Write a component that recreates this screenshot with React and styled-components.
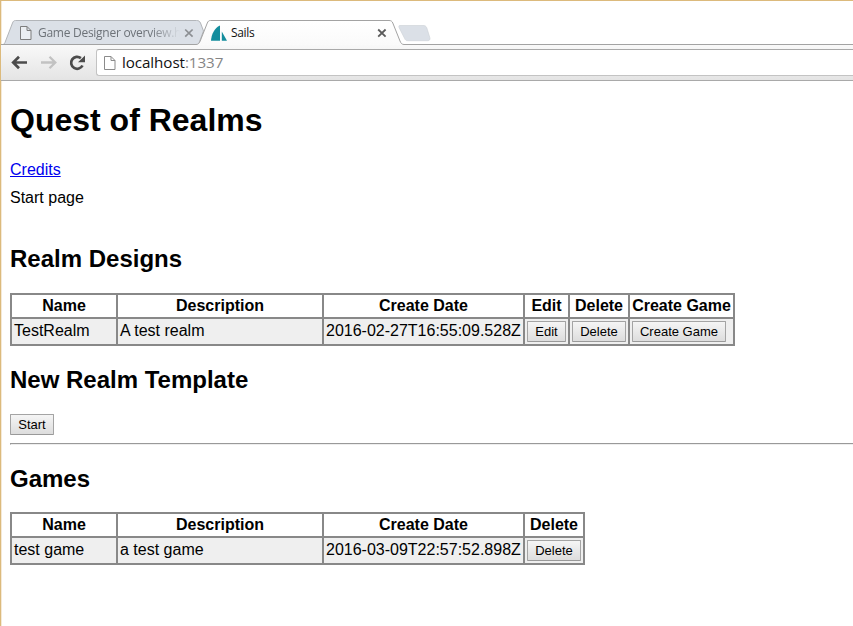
import React from 'react';
import styled, { createGlobalStyle } from 'styled-components';

const GlobalStyle = createGlobalStyle`
  * { box-sizing: border-box; }
  html, body { margin: 0; padding: 0; background: #fff; }
  body { width: 853px; height: 626px; overflow: hidden; }
`;

const Window = styled.div`
  display: flex;
  flex-direction: column;
  width: 853px;
  height: 626px;
  overflow: hidden;
  background: #fff;
  border-top: 1px solid #dcba7c;
  border-left: 1px solid #dcba7c;
  box-shadow: inset 1px 0 #f5ead8;
  color: #000;
  font-family: 'Liberation Sans', Arial, sans-serif;
  font-size: 16px;
`;

const TabStrip = styled.header`
  position: relative;
  height: 44px;
  flex: none;
  padding-top: 19px;
  display: flex;
`;

const StripArt = styled.svg`
  position: absolute;
  left: -1px;
  top: -1px;
  display: block;
`;

const Tab = styled.div`
  position: relative;
  display: flex;
  align-items: center;
  width: ${(p) => p.$width}px;
  height: 25px;
  padding-left: ${(p) => p.$inset}px;
`;

const TabTitle = styled.span`
  margin-left: ${(p) => (p.$active ? 0 : 6)}px;
  white-space: nowrap;
  font: 12px/18px 'Open Sans', sans-serif;
  letter-spacing: ${(p) => p.$tracking}px;
  color: ${(p) => (p.$active ? '#111' : '#6d7278')};
  ${(p) => !p.$active && 'mask-image: linear-gradient(90deg, #000 112px, transparent 142px);'}
`;

const Toolbar = styled.nav`
  position: relative;
  display: flex;
  align-items: center;
  height: 36px;
  flex: none;
  background: linear-gradient(#f9f9f9, #e4e4e4);
  border-bottom: 1px solid #a9a9a9;
`;

const NavIcons = styled.svg`
  display: block;
  width: 95px;
  height: 35px;
  flex: none;
`;

const AddressBar = styled.div`
  display: flex;
  align-items: center;
  flex: 1;
  height: 27px;
  padding-left: 7px;
  background: #fff;
  border: 1px solid #c3c3c3;
  border-top-color: #a9a9a9;
  border-right: 0;
  border-radius: 3px 0 0 3px;
`;

const Url = styled.span`
  margin-left: 6px;
  padding-bottom: 2px;
  font: 15.2px/22px 'Open Sans', sans-serif;
  letter-spacing: -0.08px;
  color: #111;
`;

const Port = styled.span`
  color: #858585;
`;

const Page = styled.main`
  display: flex;
  flex-direction: column;
  align-items: flex-start;
  padding-left: 9px;
`;

const Title = styled.h1`
  margin: 20px 0 0;
  font-size: 32px;
  line-height: 38px;
`;

const SectionTitle = styled.h2`
  margin: ${(p) => p.$top}px 0 ${(p) => p.$bottom}px;
  font-size: 24px;
  line-height: 28px;
`;

const CreditsLink = styled.a`
  margin-top: 21px;
  line-height: 20px;
  color: #0000ee;
  text-decoration: underline;
`;

const Intro = styled.p`
  margin: 8px 0 0;
  line-height: 20px;
`;

const Table = styled.table`
  display: grid;
  grid-template-columns: ${(p) => p.$columns};
  grid-template-rows: 22px 25px;
  gap: 2px;
  padding: 2px;
  background: #888;
`;

const Rows = styled.tbody`
  display: contents;
`;

const Head = styled.thead`
  display: contents;
`;

const Row = styled.tr`
  display: contents;
`;

const HeadCell = styled.th`
  padding: 0;
  background: #fff;
  line-height: 22px;
  text-align: center;
  white-space: nowrap;
`;

const Cell = styled.td`
  padding: 1px 2px;
  background: #efefef;
  line-height: 21px;
  white-space: nowrap;
`;

const Button = styled.button`
  display: block;
  width: ${(p) => p.$width}px;
  height: 21px;
  margin: ${(p) => (p.$inCell ? '1px 0 0' : '0')};
  padding: 0;
  border: 1px solid #a4a4a4;
  border-bottom-color: #999;
  border-radius: 1px;
  background: linear-gradient(#f5f5f5, #dddddd);
  color: #000;
  font: 13px/18px 'Liberation Sans', Arial, sans-serif;
  white-space: nowrap;
`;

const Divider = styled.hr`
  align-self: stretch;
  margin: 8px 0 0;
  height: 2px;
  border: 1px solid #eee;
  border-top-color: #999;
  border-left-color: #999;
  border-right: 0;
`;

const BUTTON_WIDTHS = { Edit: 39, Delete: 54, 'Create Game': 94 };

function PageIcon({ color = '#7d7d7d' }) {
  return (
    <svg width="12" height="16" viewBox="0 0 12 16" fill="none" stroke={color}>
      <path d="M.5 1.500h6.500l4 4v9H.5zM7 1.500v4h4" fill="#fff" fillOpacity=".45" />
    </svg>
  );
}

function TabShapes() {
  return (
    <StripArt width="853" height="46" viewBox="0 0 853 46">
      <defs>
        <linearGradient id="activeTab" x1="0" y1="0" x2="0" y2="1">
          <stop offset="0" stopColor="#fff" />
          <stop offset="1" stopColor="#f9f9f9" />
        </linearGradient>
      </defs>
      <path d="M1 44.500h1.500c1.400 0 2-.8 2.500-2L12.500 23c.7-1.800 1.500-2.500 3-2.500h181c2 0 3.200.7 4 2.500l3 8-5 13.500z" fill="#dbe0e7" stroke="#b2b5b9" />
      <path d="M196 44.500c2 0 3-1 4-3L207.300 23c.8-1.800 1.600-2.500 3.200-2.500H389c2 0 3 .7 3.800 2.500l7.200 18c.9 2.300 2 3.500 4 3.500V50H196z" fill="url(#activeTab)" />
      <path d="M1 44.500h195c2 0 3-1 4-3L207.300 23c.8-1.800 1.600-2.500 3.200-2.500H389c2 0 3 .7 3.800 2.500l7.200 18c.9 2.300 2 3.500 4 3.500h449" fill="none" stroke="#a3a3a3" />
      <path d="M399.500 25.500H423c2 0 3 .5 3.800 2.300l3 9.700c.7 2-.2 3.200-2 3.200h-20c-1.800 0-2.600-.7-3.300-2.400l-5.300-10.500c-.6-1.500-.3-2.300.3-2.300z" fill="#dbe0e7" stroke="#cbd0d5" strokeWidth=".6" />
      <path d="M211 40.800c.3-6.300 3.500-12.800 9-15.300v15.300z" fill="#138d9d" />
      <path d="M221.800 31.500l5.200 9.300h-5.200z" fill="#138d9d" />
      <path d="M185.200 29.500l7.400 7.200m0-7.200l-7.400 7.200" stroke="#8c8f93" strokeWidth="1.700" />
      <path d="M378.200 29.500l7.400 7.200m0-7.200l-7.400 7.200" stroke="#5b5b5b" strokeWidth="1.800" />
    </StripArt>
  );
}

function NavigationIcons() {
  return (
    <NavIcons viewBox="0 0 95 35" fill="none">
      <path d="M26 17.500H13M18 11.700l-5.800 5.800 5.800 5.800" stroke="#4c4c4c" strokeWidth="2.700" />
      <path d="M40 17.500h13M48.500 11.700l5.800 5.800-5.800 5.800" stroke="#c2c2c2" strokeWidth="2.300" />
      <path d="M81.500 20.500a6 6 0 1 1-1.600-7.400" stroke="#4c4c4c" strokeWidth="2.700" />
      <path d="M84 10.500v6.800h-7z" fill="#4c4c4c" />
    </NavIcons>
  );
}

function DataTable({ columns, headings, values, actions }) {
  return (
    <Table $columns={columns}>
      <Head>
        <Row>{headings.map((h) => <HeadCell key={h}>{h}</HeadCell>)}</Row>
      </Head>
      <Rows>
        <Row>
          {values.map((v) => <Cell key={v}>{v}</Cell>)}
          {actions.map((a) => (
            <Cell key={a}><Button $inCell $width={BUTTON_WIDTHS[a]}>{a}</Button></Cell>
          ))}
        </Row>
      </Rows>
    </Table>
  );
}

export default function App() {
  return (
    <>
      <GlobalStyle />
      <Window>
        <TabStrip>
          <TabShapes />
          <Tab $width={201} $inset={19}>
            <PageIcon />
            <TabTitle $tracking={-0.27}>Game Designer overview.h</TabTitle>
          </Tab>
          <Tab $width={200} $inset={29}>
            <TabTitle $active $tracking={-0.35}>Sails</TabTitle>
          </Tab>
        </TabStrip>
        <Toolbar>
          <NavigationIcons />
          <AddressBar>
            <PageIcon color="#8b8b8b" />
            <Url>localhost<Port>:1337</Port></Url>
          </AddressBar>
        </Toolbar>
        <Page>
          <Title>Quest of Realms</Title>
          <CreditsLink href="#credits">Credits</CreditsLink>
          <Intro>Start page</Intro>
          <SectionTitle $top={37} $bottom={20}>Realm Designs</SectionTitle>
          <DataTable
            columns="104px 204px 199px 43px 58px 103px"
            headings={['Name', 'Description', 'Create Date', 'Edit', 'Delete', 'Create Game']}
            values={['TestRealm', 'A test realm', '2016-02-27T16:55:09.528Z']}
            actions={['Edit', 'Delete', 'Create Game']}
          />
          <SectionTitle $top={20} $bottom={20}>New Realm Template</SectionTitle>
          <Button $width={44}>Start</Button>
          <Divider />
          <SectionTitle $top={20} $bottom={19}>Games</SectionTitle>
          <DataTable
            columns="104px 204px 199px 58px"
            headings={['Name', 'Description', 'Create Date', 'Delete']}
            values={['test game', 'a test game', '2016-03-09T22:57:52.898Z']}
            actions={['Delete']}
          />
        </Page>
      </Window>
    </>
  );
}
